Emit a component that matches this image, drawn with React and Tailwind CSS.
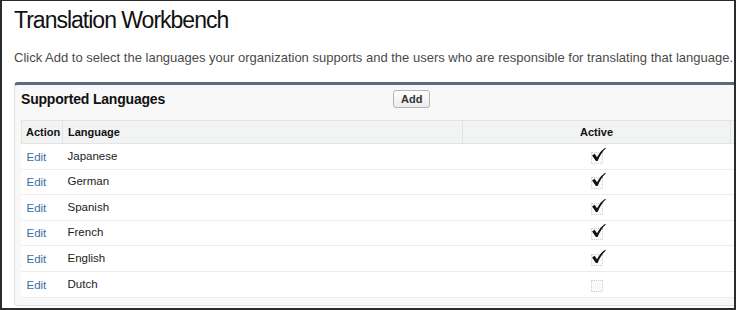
import React from "react";

const rows = [
  { lang: "Japanese", active: true },
  { lang: "German", active: true },
  { lang: "Spanish", active: true },
  { lang: "French", active: true },
  { lang: "English", active: true },
  { lang: "Dutch", active: false },
];

function Check({ on }) {
  return (
    <span className="relative inline-block w-[12px] h-[12px] border border-dotted border-[#cfcfcf] bg-[#fafafa] align-middle">
      {on && (
        <svg viewBox="0 0 14 14" className="absolute left-[-1px] top-[-6px] w-[15px] h-[15px]">
          <path d="M1 8 L3.4 6.4 L5.6 9.6 C7.6 5.6 10 2.8 13.2 0.6 L13.8 1.4 C10.8 4 8.4 7.8 6.2 13 L4.6 13 Z" fill="#111" />
        </svg>
      )}
    </span>
  );
}

export default function App() {
  return (
    <div className="w-[736px] h-[310px] overflow-hidden bg-white border-t border-x-2 border-b-2 border-[#2b2b2b] font-['Liberation_Sans',Arial,sans-serif]">
      <div className="pl-[12px]">
        <h1 className="text-[23px] leading-[28px] text-[#111] pt-[5px] font-normal tracking-[-1px]">Translation Workbench</h1>
        <p className="text-[13px] leading-[16px] text-[#4a4a4a] mt-[16px] whitespace-nowrap">
          Click Add to select the languages your organization supports and the users who are responsible for translating that language.
        </p>
        <div className="mt-[16px] w-[760px] h-[224px] bg-[#f8f8f8] border border-[#e0e0e0] border-t-[3px] border-t-[#5c6b82] rounded-[4px] pl-[6px] pr-[6px]">
          <div className="flex items-start h-[34px] pt-[5px]">
            <div className="text-[14px] leading-[18px] font-bold text-[#111] w-[372px] tracking-[-0.2px]">Supported Languages</div>
            <button className="h-[18px] px-[7px] text-[11px] font-bold text-[#333] bg-gradient-to-b from-white to-[#ececec] border border-[#b5b5b5] rounded-[3px] leading-[16px]">
              Add
            </button>
          </div>
          <table className="border-collapse table-fixed bg-white text-[11.5px] mt-[1px]" style={{ width: 760 }}>
            <colgroup>
              <col style={{ width: 41 }} />
              <col style={{ width: 400 }} />
              <col style={{ width: 268 }} />
              <col />
            </colgroup>
            <thead>
              <tr className="h-[23px] bg-[#f2f3f3] text-[#111] text-[11px]">
                <th className="text-left font-bold pl-[4px] border border-[#e2e3e3] whitespace-nowrap">Action</th>
                <th className="text-left font-bold pl-[5px] border border-[#e2e3e3]">Language</th>
                <th className="text-center font-bold border border-[#e2e3e3]">Active</th>
                <th className="border border-[#e2e3e3]"></th>
              </tr>
            </thead>
            <tbody>
              {rows.map((r) => (
                <tr key={r.lang} className="h-[25.6px] border-b border-[#ececec]">
                  <td className="pl-[5px] pt-[2px] text-[#3a6ea5]">Edit</td>
                  <td className="pl-[5px] text-[#222]">{r.lang}</td>
                  <td className="text-center pt-[2px]">
                    <Check on={r.active} />
                  </td>
                  <td></td>
                </tr>
              ))}
            </tbody>
          </table>
        </div>
      </div>
    </div>
  );
}
